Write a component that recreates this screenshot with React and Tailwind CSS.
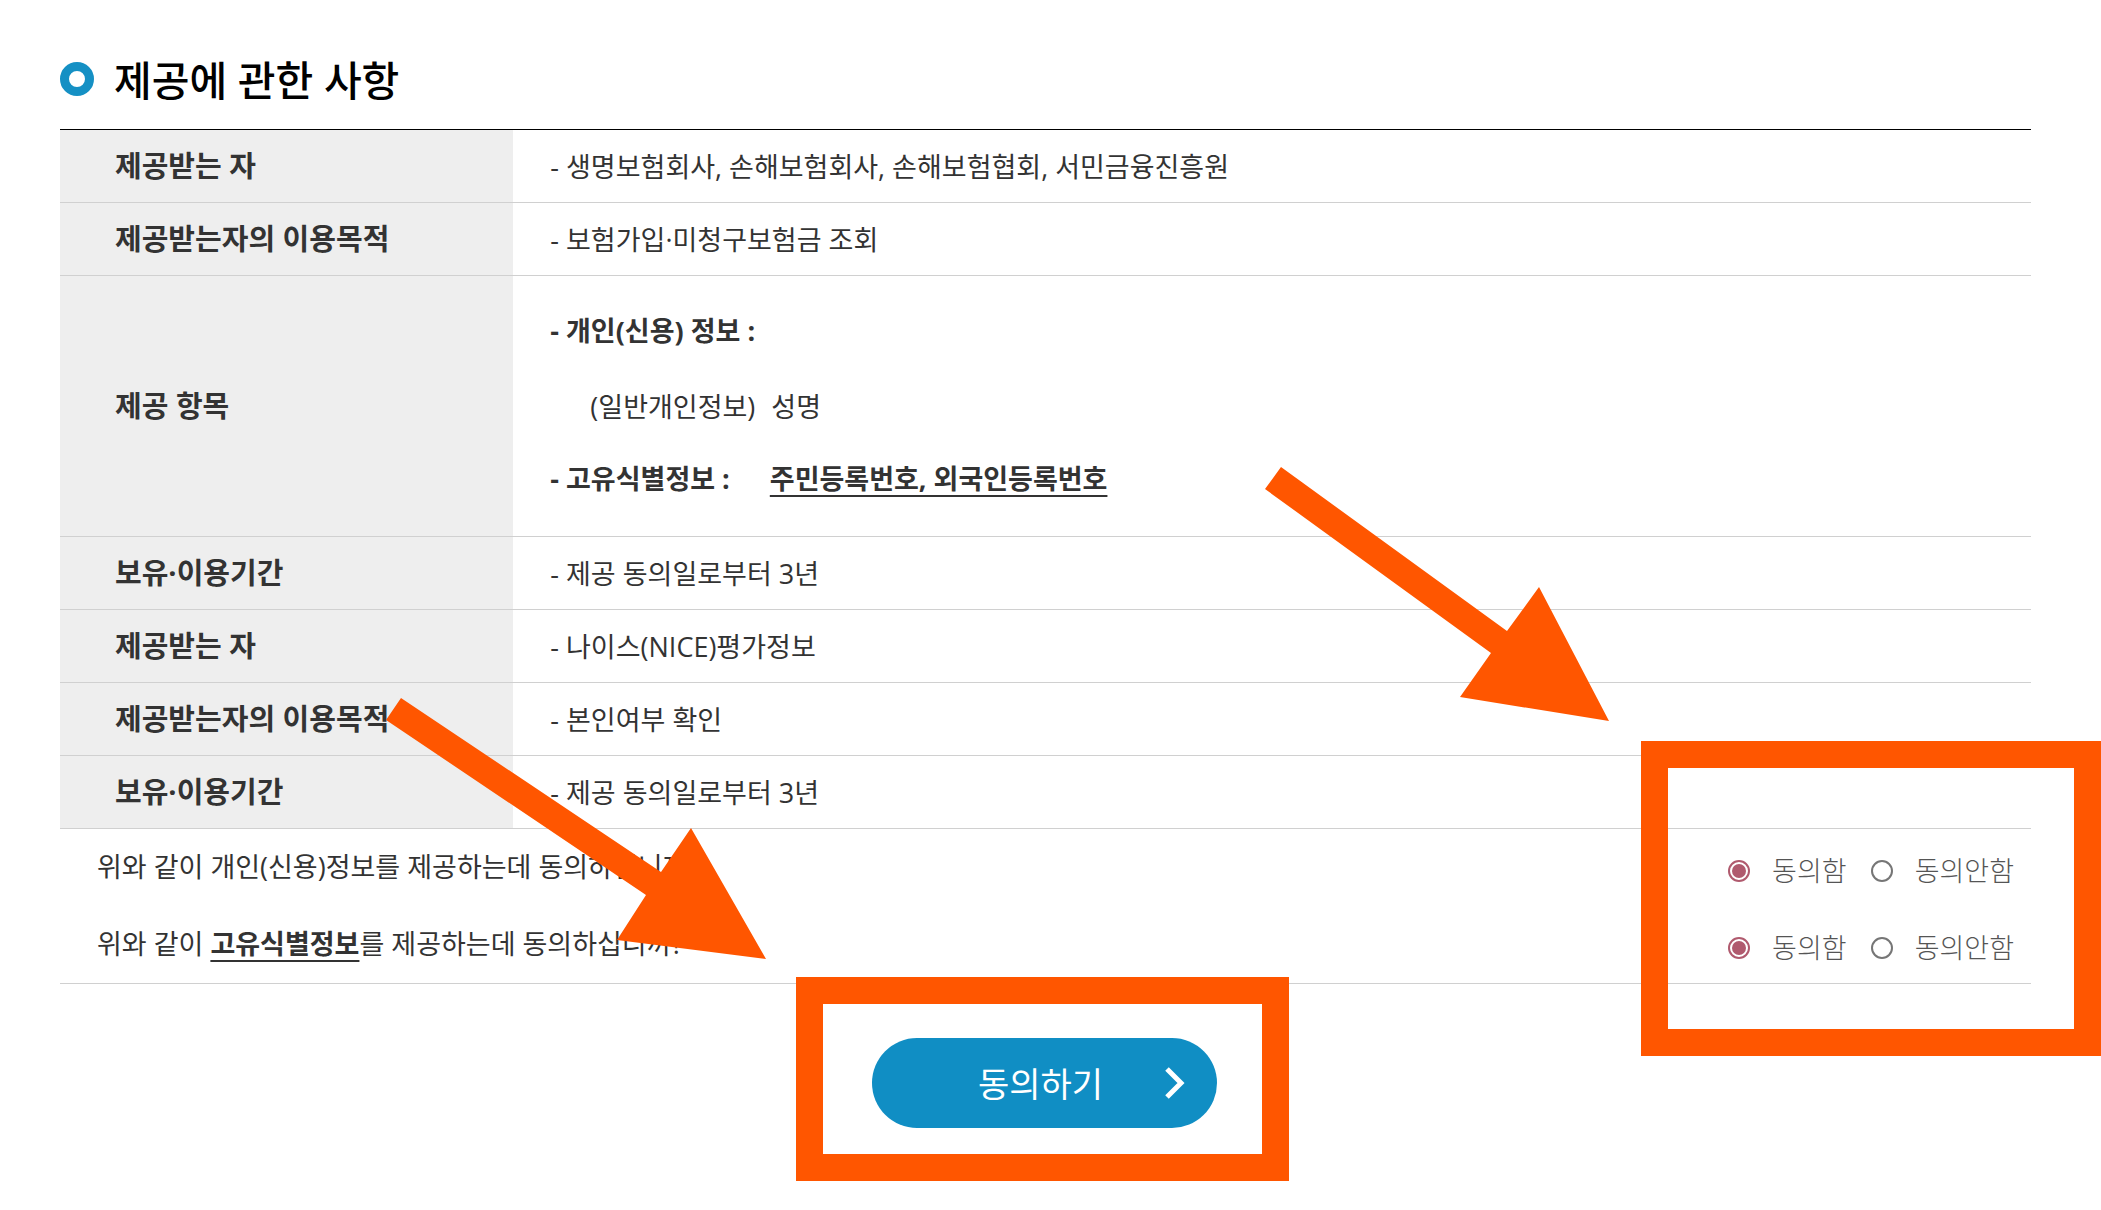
import { useState } from 'react';

const thClass = 'bg-[#eeeeee] pl-[55px] text-left align-middle text-[29px] font-bold';
const tdClass = 'pl-[37px] align-middle';

function Row({ label, children }) {
  return (
    <tr className="border-b border-[#d0d0d0]">
      <th scope="row" className={`${thClass} h-[73px]`}>{label}</th>
      <td className={`${tdClass} pt-[2px]`}>{children}</td>
    </tr>
  );
}

function Choice({ name, value, label, selected, onChange }) {
  return (
    <label className="flex items-center gap-[22px]">
      <input
        type="radio"
        name={name}
        value={value}
        checked={selected === value}
        onChange={() => onChange(value)}
        className="size-[22px] appearance-none rounded-full border-2 border-[#767676] bg-clip-content p-[2px] checked:border-[#b05a6e] checked:bg-[#b05a6e]"
      />
      <span className="font-light text-[#555555]">{label}</span>
    </label>
  );
}

function Agreement({ name, children }) {
  const [answer, setAnswer] = useState('yes');

  return (
    <div className="flex items-center justify-between">
      <p>{children}</p>
      <div role="radiogroup" aria-label={name} className="flex gap-6 pt-2">
        <Choice name={name} value="yes" label="동의함" selected={answer} onChange={setAnswer} />
        <Choice name={name} value="no" label="동의안함" selected={answer} onChange={setAnswer} />
      </div>
    </div>
  );
}

export default function App() {
  return (
    <main className="relative min-h-screen overflow-hidden bg-white pt-[50px] pr-[70px] pb-[82px] pl-[60px] font-['Open_Sans','Noto_Sans_CJK_KR',sans-serif] text-[27px] leading-9 text-[#333333]">
      <h1 className="flex h-[79px] items-start gap-5 text-[41px] leading-[60px] font-medium text-black">
        <span className="mt-3 size-[34px] rounded-full border-9 border-[#1590c4]" />
        제공에 관한 사항
      </h1>

      <table className="w-full border-collapse border-t border-black">
        <colgroup>
          <col className="w-[23%]" />
          <col />
        </colgroup>
        <tbody>
          <Row label="제공받는 자">- 생명보험회사, 손해보험회사, 손해보험협회, 서민금융진흥원</Row>
          <Row label="제공받는자의 이용목적">- 보험가입·미청구보험금 조회</Row>
          <tr className="border-b border-[#d0d0d0]">
            <th scope="row" className={`${thClass} h-[261px]`}>제공 항목</th>
            <td className={`${tdClass} pb-[2px]`}>
              <p className="mb-10 font-bold">- 개인(신용) 정보 :</p>
              <p className="mb-9 flex gap-4 pl-10">
                <span>(일반개인정보)</span>
                <span>성명</span>
              </p>
              <p className="flex gap-10 font-bold">
                <span>- 고유식별정보 :</span>
                <span className="underline decoration-2 underline-offset-[6px]">주민등록번호, 외국인등록번호</span>
              </p>
            </td>
          </tr>
          <Row label="보유·이용기간">- 제공 동의일로부터 3년</Row>
          <Row label="제공받는 자">- 나이스(NICE)평가정보</Row>
          <Row label="제공받는자의 이용목적">- 본인여부 확인</Row>
          <Row label="보유·이용기간">- 제공 동의일로부터 3년</Row>
        </tbody>
      </table>

      <section className="relative flex flex-col gap-[33px] border-b border-[#d0d0d0] pt-4 pr-[17px] pb-[17px] pl-[37px]">
        <Agreement name="개인(신용)정보">위와 같이 개인(신용)정보를 제공하는데 동의하십니까?</Agreement>
        <Agreement name="고유식별정보">
          위와 같이 <strong className="font-bold underline decoration-2 underline-offset-[6px]">고유식별정보</strong>를 제공하는데 동의하십니까?
        </Agreement>
        <div className="pointer-events-none absolute -top-[88px] -right-[70px] h-[315px] w-[460px] border-27 border-[#ff5600]" />
      </section>

      <div className="mt-[54px] flex justify-center pr-[2px]">
        <div className="relative">
          <button type="button" className="relative flex h-[90px] w-[345px] items-center justify-center rounded-full bg-[#108ec4] pt-[2px] pr-2 text-[34px] text-white">
            동의하기
            <svg className="absolute inset-y-0 right-[30px] my-auto h-9 w-6" viewBox="0 0 24 36" fill="none" stroke="currentColor" strokeWidth="5">
              <path d="M4 4l14 14L4 32" />
            </svg>
          </button>
          <div className="pointer-events-none absolute -top-[61px] -right-[72px] -bottom-[53px] -left-[76px] border-27 border-[#ff5600]" />
        </div>
      </div>

      {/* pointer arrows */}
      <svg className="pointer-events-none absolute top-[698px] left-[386px]" width="380" height="262" fill="#ff5600" aria-hidden="true">
        <path d="M15 0L275 174L305 130L380 261L231 242L260 197L0 22Z" />
      </svg>
      <svg className="pointer-events-none absolute top-[467px] left-[1265px]" width="344" height="255" fill="#ff5600" aria-hidden="true">
        <path d="M16 0L242 164L274 120L344 254L195 230L226 186L0 22Z" />
      </svg>
    </main>
  );
}
